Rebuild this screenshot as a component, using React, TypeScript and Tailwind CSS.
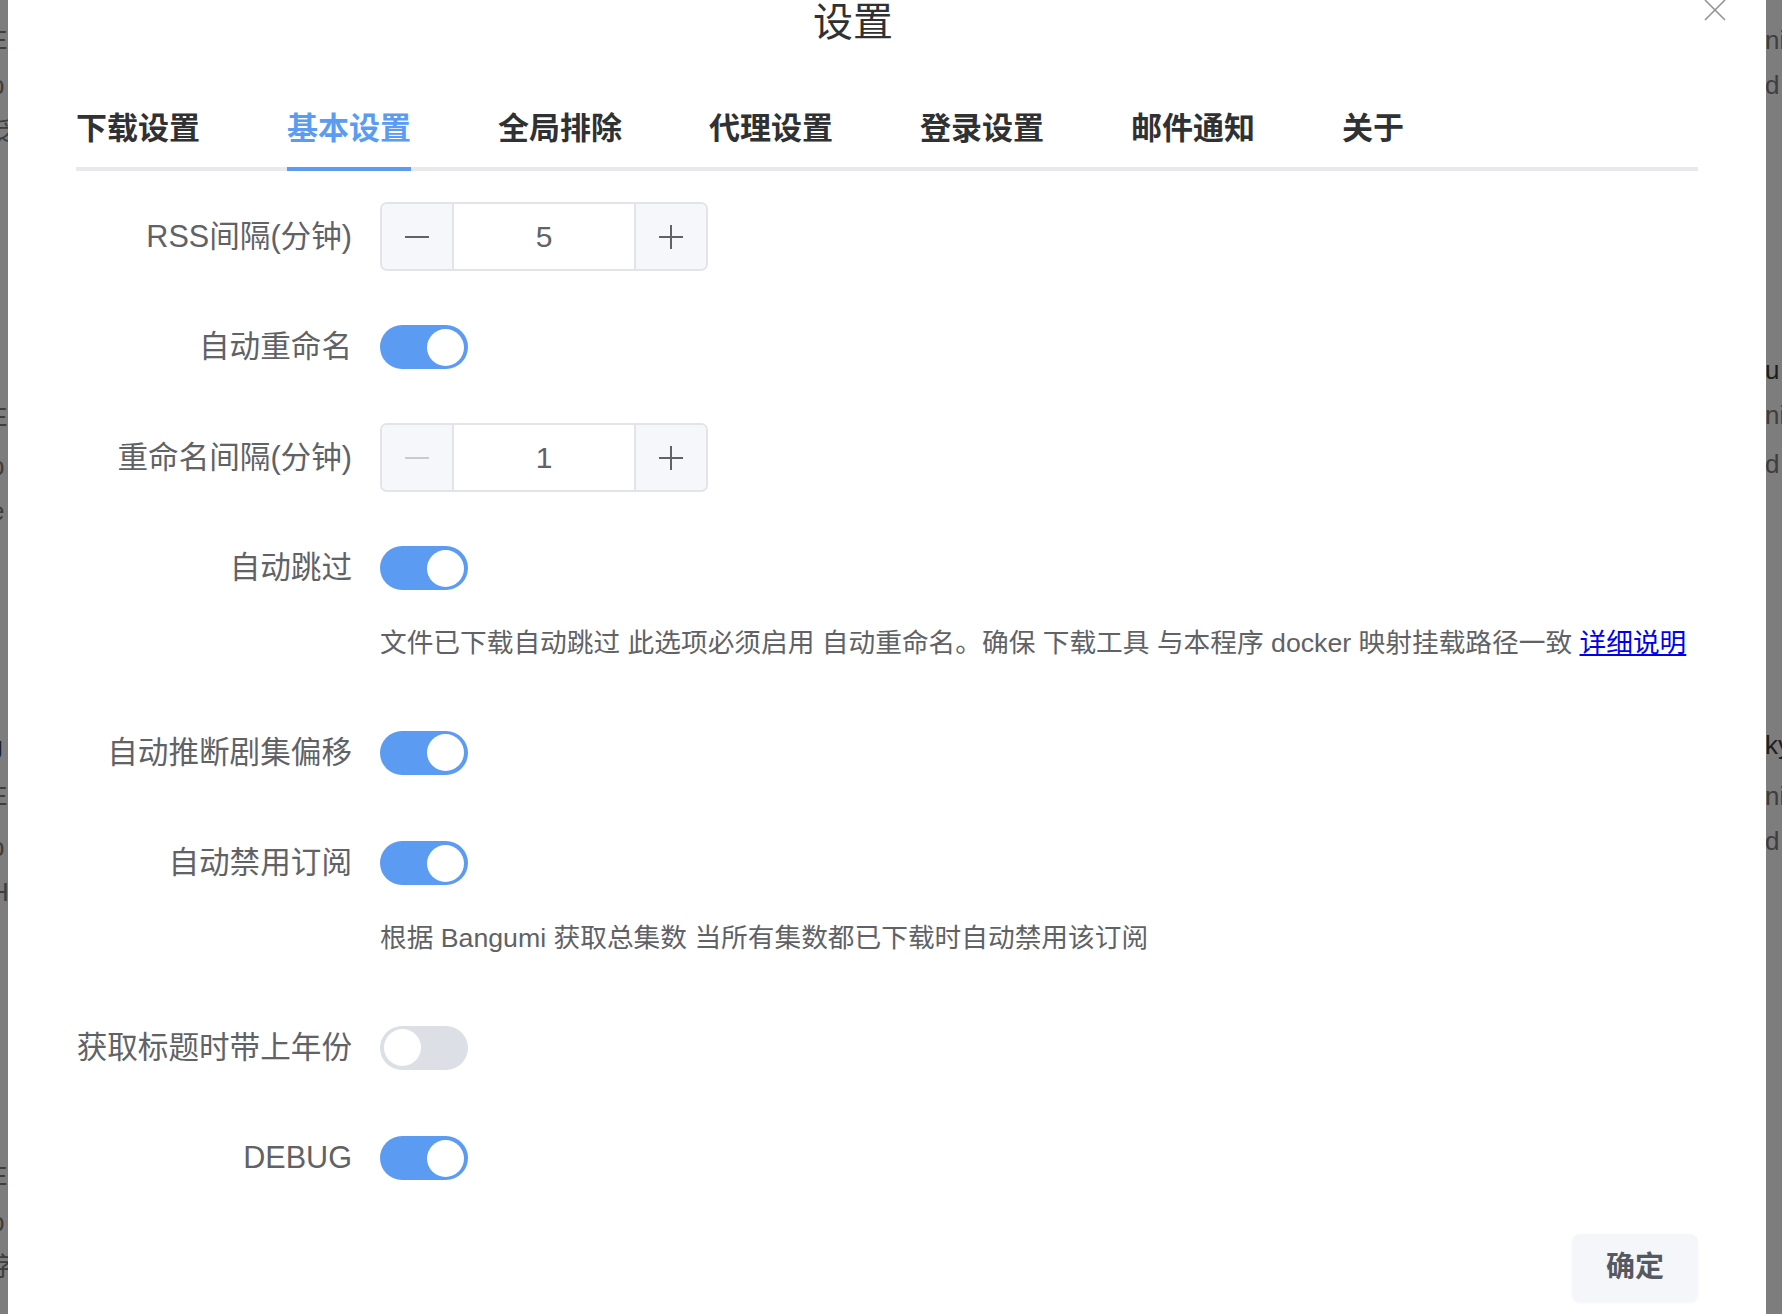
import React from "react";

const FONT = '"Liberation Sans", "Noto Sans CJK SC", sans-serif';

function Toggle({ on }: { on: boolean }) {
  return (
    <div
      className={
        on
          ? "w-[88px] h-[44px] rounded-full bg-[#5b9cf2] flex items-center justify-end px-[4px]"
          : "w-[88px] h-[44px] rounded-full bg-[#dcdfe6] flex items-center justify-start px-[4px]"
      }
    >
      <div className="w-[37px] h-[37px] rounded-full bg-white" />
    </div>
  );
}

function NumberInput({ value, minusDisabled }: { value: string; minusDisabled?: boolean }) {
  return (
    <div className="w-[328px] h-[69px] border-2 border-[#e2e4ea] rounded-[7px] flex overflow-hidden">
      <div className="w-[72px] h-full bg-[#f5f7fa] border-r-2 border-[#e2e4ea] flex items-center justify-center">
        <div className={minusDisabled ? "w-[24px] h-[2px] bg-[#c8cbd2]" : "w-[24px] h-[2px] bg-[#606266]"} />
      </div>
      <div className="flex-1 flex items-center justify-center text-[30px] text-[#606266]">{value}</div>
      <div className="w-[72px] h-full bg-[#f5f7fa] border-l-2 border-[#e2e4ea] flex items-center justify-center">
        <svg width="26" height="26" viewBox="0 0 26 26">
          <path d="M13 1V25M1 13H25" stroke="#606266" strokeWidth="2" />
        </svg>
      </div>
    </div>
  );
}

function Row({
  label,
  children,
  help,
}: {
  label: string;
  children: React.ReactNode;
  help?: React.ReactNode;
}) {
  return (
    <div className="mb-[41.5px]">
      <div className="flex items-center h-[69px]">
        <div className="w-[276px] shrink-0 text-right text-[30.6px] text-[#606266] whitespace-nowrap">{label}</div>
        <div className="ml-[28px]">{children}</div>
      </div>
      {help && (
        <div className="ml-[304px] mt-[21px] pb-[15px] text-[26.7px] leading-[38px] text-[#606266] whitespace-nowrap">
          {help}
        </div>
      )}
    </div>
  );
}

const tabs = ["下载设置", "基本设置", "全局排除", "代理设置", "登录设置", "邮件通知", "关于"];

function Strip({
  widthClass,
  offsetClass,
  items,
}: {
  widthClass: string;
  offsetClass: string;
  items: { t: string; h: number; dark?: boolean }[];
}) {
  return (
    <div className={widthClass + " shrink-0 overflow-hidden flex flex-col text-[26px] leading-[44px] pt-[18px]"}>
      {items.map((it, i) => (
        <div
          key={i}
          style={{ height: it.h }}
          className={(it.dark ? "text-[#1e1e1e] " : "text-[#3e3e3e] ") + offsetClass + " whitespace-nowrap shrink-0"}
        >
          {it.t}
        </div>
      ))}
    </div>
  );
}

const leftItems = [
  { t: "E", h: 45 },
  { t: "p", h: 46 },
  { t: "泛", h: 238 },
  { t: "l", h: 48, dark: true },
  { t: "E", h: 49 },
  { t: "p", h: 45 },
  { t: "e", h: 239 },
  { t: "J", h: 46, dark: true },
  { t: "E", h: 51 },
  { t: "p", h: 45 },
  { t: "H", h: 284 },
  { t: "E", h: 46 },
  { t: "p", h: 45 },
  { t: "字", h: 44 },
];

const rightItems = [
  { t: "ni", h: 45 },
  { t: "d", h: 285 },
  { t: "u", h: 45, dark: true },
  { t: "ni", h: 49 },
  { t: "d", h: 281 },
  { t: "ky", h: 51, dark: true },
  { t: "ni", h: 45 },
  { t: "d", h: 44 },
];

export default function App() {
  return (
    <div className="w-[1782px] h-[1314px] bg-[#7d7d7d] flex overflow-hidden" style={{ fontFamily: FONT }}>
      <Strip widthClass="w-[8px]" offsetClass="-ml-[10px]" items={leftItems} />
      <div className="w-[1758px] h-full bg-white relative px-[68px] flex flex-col">
        <div className="h-[44px] pr-[68px] flex items-center justify-center text-[40px] leading-none text-[#303133]">
          设置
        </div>
        <div className="absolute right-[39px] top-[-2px]">
          <svg width="24" height="24" viewBox="0 0 24 24">
            <path d="M2 2L22 22M22 2L2 22" stroke="#909399" strokeWidth="1.6" />
          </svg>
        </div>

        <div className="mt-[52px] relative flex gap-[87px] border-b-4 border-[#e8e9ec]">
          {tabs.map((t, i) => (
            <div key={t} className="relative h-[71px] pt-[2px] pb-[7px]">
              <div
                className={
                  i === 1
                    ? "h-[62px] flex items-center text-[31px] font-semibold text-[#5b9cf2] whitespace-nowrap"
                    : "h-[62px] flex items-center text-[31px] font-semibold text-[#303133] whitespace-nowrap"
                }
              >
                {t}
              </div>
              {i === 1 && <div className="absolute left-0 right-0 bottom-[-4px] h-[4px] bg-[#5b9cf2]" />}
            </div>
          ))}
        </div>

        <div className="mt-[31px]">
          <Row label="RSS间隔(分钟)">
            <NumberInput value="5" />
          </Row>
          <Row label="自动重命名">
            <Toggle on />
          </Row>
          <Row label="重命名间隔(分钟)">
            <NumberInput value="1" minusDisabled />
          </Row>
          <Row
            label="自动跳过"
            help={
              <>
                文件已下载自动跳过 此选项必须启用 自动重命名。确保 下载工具 与本程序 docker 映射挂载路径一致{" "}
                <a className="text-[#0000ee] underline">详细说明</a>
              </>
            }
          >
            <Toggle on />
          </Row>
          <Row label="自动推断剧集偏移">
            <Toggle on />
          </Row>
          <Row label="自动禁用订阅" help={<>根据 Bangumi 获取总集数 当所有集数都已下载时自动禁用该订阅</>}>
            <Toggle on />
          </Row>
          <Row label="获取标题时带上年份">
            <Toggle on={false} />
          </Row>
          <Row label="DEBUG">
            <Toggle on />
          </Row>
        </div>

        <div className="flex justify-end">
          <button className="w-[126px] h-[68px] rounded-[8px] bg-[#f4f6f9] text-[29px] font-semibold text-[#555a62] shadow-[0_1px_3px_rgba(0,0,0,0.04)]">
            确定
          </button>
        </div>
      </div>
      <Strip widthClass="w-[16px]" offsetClass="-ml-[1px]" items={rightItems} />
    </div>
  );
}
